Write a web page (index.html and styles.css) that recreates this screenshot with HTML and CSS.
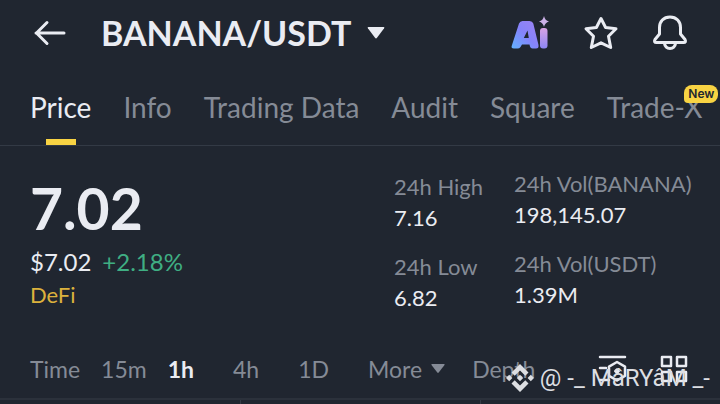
FILE: index.html
```html
<!DOCTYPE html>
<html lang="en">
<head>
<meta charset="utf-8">
<meta name="viewport" content="width=device-width, initial-scale=1">
<title>BANANA/USDT</title>
<link rel="stylesheet" href="styles.css">
</head>
<body>
<header class="topbar">
  <button class="icon-btn" aria-label="Back">
    <svg width="32" height="26" viewBox="0 0 32 26" class="stroke"><path d="M30 13H2M13 2.500 2.500 13 13 23.500"/></svg>
  </button>
  <button class="pair"><h1>BANANA/USDT</h1>
    <svg width="18" height="12" viewBox="0 0 18 12"><path d="M1.500 0h15q1.500 0 .6 1.300L10 10.800q-1 1.200-2 0L.9 1.300Q0 0 1.500 0z" fill="currentColor"/></svg>
  </button>
  <div class="actions">
    <button class="icon-btn" aria-label="AI">
      <svg width="40" height="36" viewBox="0 0 40 36">
        <defs><linearGradient id="ai" x1="0" y1="1" x2="1" y2="0"><stop offset="0" stop-color="#62b2ff"/><stop offset=".5" stop-color="#8583fa"/><stop offset="1" stop-color="#9c83f2"/></linearGradient>
        <linearGradient id="dot" x1="0" y1="0" x2="0" y2="1"><stop offset="0" stop-color="#d9a3e4"/><stop offset="1" stop-color="#8d87f5"/></linearGradient></defs>
        <path d="M12.500 6h7q3 0 3.800 2.500l5.200 21.500q.5 3.500-2.500 3.500h-3.500q-2 0-2.500-2l-.5-2H12l-1.500 2.500q-1 1.500-3 1.500H4q-3.500 0-2-3.500L9 8.500Q10 6 12.500 6zM17.500 15.500 13.800 23h5z" fill="url(#ai)" fill-rule="evenodd"/>
        <rect x="30" y="13" width="7.500" height="20.500" rx="3" fill="url(#dot)"/>
        <path d="M34 1q1 4.500 5 5.500-4 1-5 5.500-1-4.500-5-5.500 4-1 5-5.500z" fill="#cdb2e8"/>
      </svg>
    </button>
    <button class="icon-btn" aria-label="Add to favorites">
      <svg width="36" height="36" viewBox="0 0 36 36" class="stroke"><path d="m18 3.500 4.600 9 10.400 1.300-7.500 7.500 2.200 11.200L18 27.800 8.300 32.500l2.200-11.200L3 13.800 13.400 12.500z"/></svg>
    </button>
    <button class="icon-btn" aria-label="Price alerts">
      <svg width="36" height="36" viewBox="0 0 36 36" class="stroke"><path d="M18 2C11.500 2 7.500 6.500 7.500 12.500V19L3 24.500q-1.500 3 1.500 3h27q3 0 1.500-3L28.500 19v-6.500C28.500 6.500 24.500 2 18 2zM12.500 28.500c1 6.500 10 6.500 11 0"/></svg>
    </button>
  </div>
</header>
<nav class="tabs">
  <a href="#price" class="active">Price</a>
  <a href="#info">Info</a>
  <a href="#data">Trading Data</a>
  <a href="#audit">Audit</a>
  <a href="#square">Square</a>
  <a href="#trade-x">Trade-X<span class="badge">New</span></a>
</nav>
<main>
  <section class="summary">
    <div class="quote">
      <strong class="last">7.02</strong>
      <div class="fiat"><span>$7.02</span><span class="up">+2.18%</span></div>
      <a href="#defi" class="tag">DeFi</a>
    </div>
    <dl class="stats range">
      <div><dt>24h High</dt><dd>7.16</dd></div>
      <div><dt>24h Low</dt><dd>6.82</dd></div>
    </dl>
    <dl class="stats">
      <div><dt>24h Vol(BANANA)</dt><dd>198,145.07</dd></div>
      <div><dt>24h Vol(USDT)</dt><dd>1.39M</dd></div>
    </dl>
  </section>
  <div class="intervals">
    <div class="short">
      <button>Time</button>
      <button>15m</button>
      <button class="active">1h</button>
    </div>
    <div class="long">
      <button>4h</button>
      <button>1D</button>
      <button class="more">More <svg width="14" height="10" viewBox="0 0 14 10"><path d="M1 0h12q1 0 .5 1L7.700 8.500q-.7.900-1.400 0L.5 1Q0 0 1 0z" fill="currentColor"/></svg></button>
    </div>
    <button>Depth</button>
    <div class="tools">
      <button class="icon-btn" aria-label="Indicator settings">
        <svg width="30" height="30" viewBox="0 0 30 30" class="stroke thin"><path d="M3 3h25M3 14h6M3 26h9M20 8l8 4.600v9.200l-8 4.600-8-4.600v-9.200z"/><path d="m20 15.500 1.700 1.700-1.700 1.700-1.700-1.700z"/></svg>
      </button>
      <button class="icon-btn" aria-label="Layout">
        <svg width="28" height="28" viewBox="0 0 28 28" class="stroke thin"><path d="M2 2h9v9H2zM17 2h9v9h-9zM2 17h9v9H2zM17 17h9v9h-9z"/></svg>
      </button>
    </div>
    <div class="watermark">
      <svg width="28" height="28" viewBox="0 0 28 28"><path d="m14 0 8.500 8.500-3.200 3.200L14 6.400l-5.300 5.300-3.200-3.200zM14 28l8.500-8.500-3.200-3.200-5.300 5.300-5.300-5.300-3.200 3.200zM14 10.800l3.200 3.200-3.200 3.200-3.200-3.200zM3.200 10.800 6.400 14l-3.200 3.200L0 14zM24.800 10.800 28 14l-3.200 3.200-3.200-3.200z" fill="currentColor"/></svg>
      <span>@ -_ MâRYâM _-</span>
    </div>
  </div>
  <div class="chart"><i></i><i></i><i></i></div>
</main>
</body>
</html>
```
FILE: styles.css
```css
* { box-sizing: border-box; }
body {
  margin: 0;
  background: #202630;
  color: #eaecf2;
  font-family: Lato, "Open Sans", sans-serif;
  overflow: hidden;
}
button { border: 0; padding: 0; background: none; color: inherit; font: inherit; }
a { color: inherit; text-decoration: none; }
svg { display: block; }
.stroke { fill: none; stroke: currentColor; stroke-width: 3; stroke-linecap: round; stroke-linejoin: round; }
.thin { stroke-width: 2.5; }
.topbar { display: flex; align-items: center; height: 66px; padding: 0 32px 0 34px; }
.pair { display: flex; align-items: center; gap: 16px; margin-left: 35px; }
h1 { margin: 0; font-size: 34px; line-height: 40px; font-weight: 700; }
.actions { display: flex; align-items: center; gap: 33px; margin-left: auto; }
.tabs {
  display: flex;
  gap: 32px;
  height: 80px;
  padding: 21px 0 0 30px;
  border-bottom: 1px solid #333a45;
  color: #858b96;
  font-size: 28px;
  line-height: 40px;
  white-space: nowrap;
}
.tabs a { position: relative; }
.tabs .active { color: #eaecf2; }
.tabs .active::after {
  content: "";
  position: absolute;
  left: 50%;
  bottom: 0;
  width: 30px;
  height: 6px;
  margin-left: -15px;
  background: #f8d343;
}
.badge {
  position: absolute;
  top: -2px;
  right: -16px;
  padding: 0 4px;
  border-radius: 8px 8px 8px 4px;
  background: #f8d343;
  color: #202630;
  font: 600 12px/18px Inter, sans-serif;
}
.summary { display: flex; padding: 22px 30px 0; }
.quote { flex: 1; padding-top: 4px; }
.last { display: block; font-size: 57px; line-height: 72px; }
.fiat { display: flex; gap: 11px; font-size: 24px; line-height: 36px; }
.up { color: #3fae83; }
.tag { display: block; color: #dcb23d; font-size: 22px; line-height: 30px; }
.stats { width: 176px; margin: 0; font-size: 22px; line-height: 31px; }
.stats div { margin-bottom: 18px; }
.stats dt { color: #858b96; white-space: nowrap; }
.stats dd { margin: 0; }
.range { width: 120px; padding-top: 3px; }
.intervals {
  position: relative;
  display: flex;
  align-items: center;
  gap: 39px;
  height: 67px;
  padding: 9px 32px 0 30px;
  color: #858b96;
  font-size: 23px;
}
.short { display: flex; gap: 21px; }
.long { display: flex; gap: 39px; margin-right: -12px; }
.intervals .active { color: #eaecf2; font-weight: 700; }
.more { display: flex; align-items: center; gap: 9px; }
.tools { display: flex; align-items: center; gap: 33px; margin-left: auto; color: #eaecf2; }
.watermark {
  position: absolute;
  right: 10px;
  top: 32px;
  display: flex;
  align-items: center;
  gap: 6px;
  color: #dcdee2;
  font: 24px/30px Roboto, sans-serif;
  white-space: nowrap;
}
.chart { display: grid; grid-template-columns: repeat(3, 1fr); height: 6px; border-top: 2px solid #2b313b; }
.chart i + i { border-left: 1px solid #333a45; }
```
